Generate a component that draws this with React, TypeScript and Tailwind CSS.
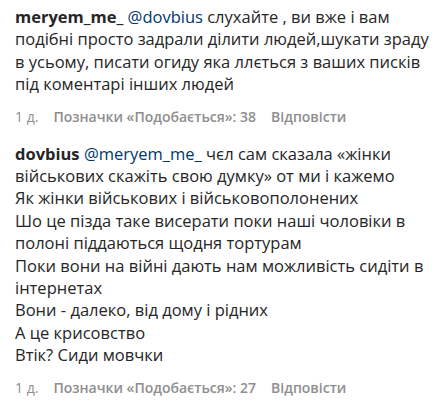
import React from 'react';

type Comment = {
  user: string;
  mention: string;
  lines: string[];
  likes: number;
};

const comments: Comment[] = [
  {
    user: 'meryem_me_',
    mention: '@dovbius',
    lines: [
      'слухайте , ви вже і вам',
      'подібні просто задрали ділити людей,шукати зраду',
      'в усьому, писати огиду яка ллється з ваших писків',
      'під коментарі інших людей',
    ],
    likes: 38,
  },
  {
    user: 'dovbius',
    mention: '@meryem_me_',
    lines: [
      'чєл сам сказала «жінки',
      'військових скажіть свою думку» от ми і кажемо',
      'Як жінки військових і військовополонених',
      'Шо це пізда таке висерати поки наші чоловіки в',
      'полоні піддаються щодня тортурам',
      'Поки вони на війні дають нам можливість сидіти в',
      'інтернетах',
      'Вони - далеко, від дому і рідних',
      'А це крисовство',
      'Втік? Сиди мовчки',
    ],
    likes: 27,
  },
];

function CommentItem({ c }: { c: Comment }) {
  return (
    <div className="flex flex-col">
      <div className="text-[16.5px] leading-[22.4px] text-[#262626]">
        {c.lines.map((line, i) => (
          <div key={i} className="whitespace-nowrap">
            {i === 0 && (
              <>
                <span className="font-bold">{c.user}</span>{' '}
                <span className="text-[#00376b]">{c.mention}</span>{' '}
              </>
            )}
            {line}
          </div>
        ))}
      </div>
      <div className="mt-[11px] flex items-center gap-[15px] text-[14px] leading-[20px] text-[#8e8e8e]">
        <span>1 д.</span>
        <span className="font-semibold">Позначки «Подобається»: {c.likes}</span>
        <span className="font-semibold">Відповісти</span>
      </div>
    </div>
  );
}

export default function App() {
  return (
    <div
      className="flex h-[404px] w-[443px] flex-col gap-[16px] bg-white px-[15px] pt-[6px]"
      style={{ fontFamily: '"Open Sans", "Noto Sans", sans-serif' }}
    >
      {comments.map((c) => (
        <CommentItem key={c.user} c={c} />
      ))}
    </div>
  );
}
